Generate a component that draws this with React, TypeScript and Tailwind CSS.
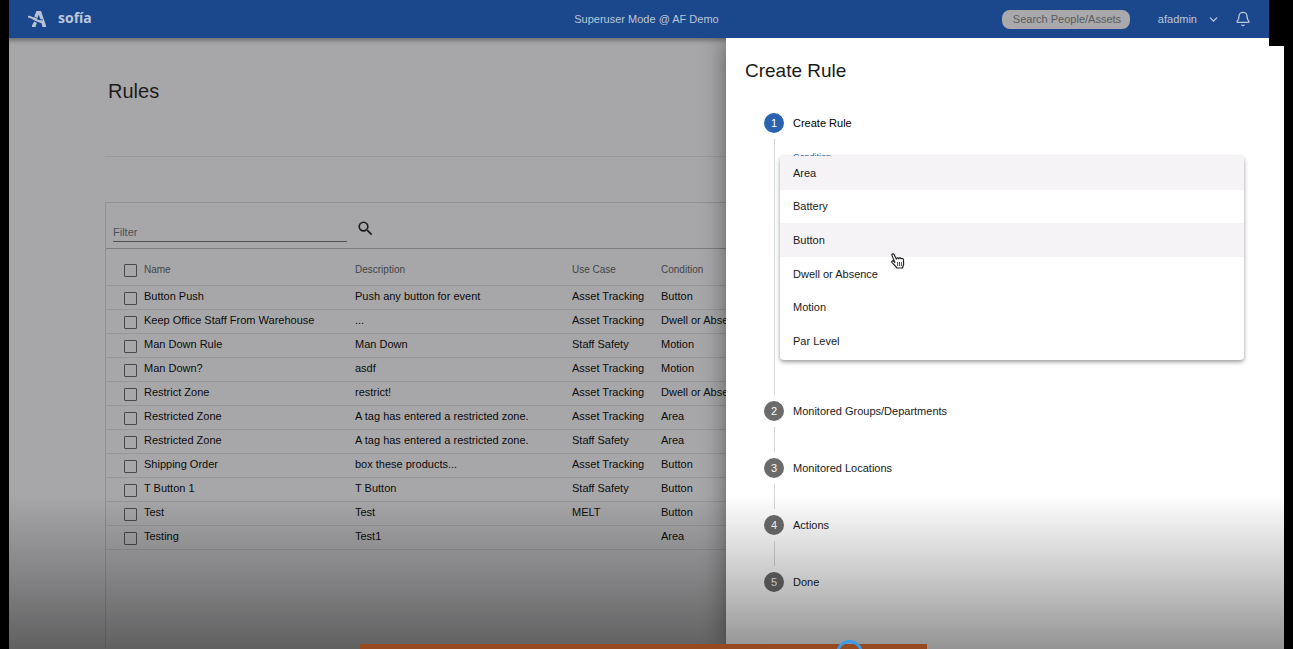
import { useState } from "react";
import { Bell, ChevronDown } from "lucide-react";
import { MdSearch } from "react-icons/md";

interface Rule {
  name: string;
  description: string;
  useCase: string;
  condition: string;
}

const rules: Rule[] = [
  { name: "Button Push", description: "Push any button for event", useCase: "Asset Tracking", condition: "Button" },
  { name: "Keep Office Staff From Warehouse", description: "...", useCase: "Asset Tracking", condition: "Dwell or Absence" },
  { name: "Man Down Rule", description: "Man Down", useCase: "Staff Safety", condition: "Motion" },
  { name: "Man Down?", description: "asdf", useCase: "Asset Tracking", condition: "Motion" },
  { name: "Restrict Zone", description: "restrict!", useCase: "Asset Tracking", condition: "Dwell or Absence" },
  { name: "Restricted Zone", description: "A tag has entered a restricted zone.", useCase: "Asset Tracking", condition: "Area" },
  { name: "Restricted Zone", description: "A tag has entered a restricted zone.", useCase: "Staff Safety", condition: "Area" },
  { name: "Shipping Order", description: "box these products...", useCase: "Asset Tracking", condition: "Button" },
  { name: "T Button 1", description: "T Button", useCase: "Staff Safety", condition: "Button" },
  { name: "Test", description: "Test", useCase: "MELT", condition: "Button" },
  { name: "Testing", description: "Test1", useCase: "", condition: "Area" },
];

const conditions = ["Area", "Battery", "Button", "Dwell or Absence", "Motion", "Par Level"];

const steps = ["Create Rule", "Monitored Groups/Departments", "Monitored Locations", "Actions", "Done"];

function Logo() {
  return (
    <svg viewBox="0 0 20 18" className="h-[18px] w-5" fill="#b9c3d6">
      <path d="M8.500 1 H13 L18 15.500 V17 H14.200 V15.500 L10.800 4.500 L10 6.800 L8.700 10.300 L5.500 8.300 Z" />
      <path d="M6.200 11.500 L9 13 L7.800 15.500 V17 H4 V15.500 Z" />
      <path d="M0 5.800 C4.500 5.500 8.500 10.800 15.500 10.800 L16.200 13 C9.500 13.800 5.500 8.500 0 7.500 Z" />
      <path d="M3.500 6 C7.500 6.500 10 9.700 15 10" fill="none" stroke="#1b488c" strokeWidth="0.8" />
    </svg>
  );
}

function HandCursor() {
  return (
    <svg
      viewBox="0 0 16 18"
      className="pointer-events-none absolute top-[96px] left-[110px] h-[18px] w-4"
      fill="#fff"
      stroke="#222"
      strokeWidth="1.2"
      strokeLinejoin="round"
    >
      <path d="M4.800 10.500 L2 3.400 C1.500 1.800 3.400 1.200 4.100 2.600 L6.300 7 C6.600 5.600 8.200 5.500 8.700 6.700 C9.200 5.600 10.700 5.700 11.100 6.800 C12 6 13.400 6.600 13.500 8 L13.600 12 C13.600 13.500 12.800 14 12.600 16 H6.800 C6 14 3.500 12.500 2 10.500 C1.200 9.200 2.600 8.300 3.700 9.400 Z" />
      <path d="M7.600 10v4M9.500 10v4M11.400 10v4" strokeWidth="0.8" />
    </svg>
  );
}

function Header() {
  return (
    <header className="mr-[15px] grid h-[38px] grid-cols-3 items-center bg-[#1b488c] pr-[18px] pl-[19px] text-[11px] text-[#bcc6d8]">
      <a href="#" className="flex items-center gap-2.5">
        <Logo />
        <span className="pb-0.5 font-['Open_Sans',sans-serif] text-[14px] leading-5 font-bold">sofía</span>
      </a>
      <div className="pl-[14px] text-center">Superuser Mode @ AF Demo</div>
      <div className="flex items-center justify-end">
        <input
          type="text"
          aria-label="Search People/Assets"
          placeholder="Search People/Assets"
          className="mr-7 h-[19px] w-32 rounded-lg bg-[#a9a9ab] pl-[11px] placeholder:text-[#5a5a5c]"
        />
        <button className="mr-[15px] flex items-center gap-2.5">
          afadmin
          <ChevronDown size={13} strokeWidth={2.5} />
        </button>
        <button aria-label="Notifications">
          <Bell size={16} />
        </button>
      </div>
    </header>
  );
}

function CheckBox({ label }: { label: string }) {
  return (
    <input
      type="checkbox"
      aria-label={label}
      className="mt-0.5 block size-[13px] appearance-none rounded-[1px] border border-[#48484a] checked:bg-[#48484a]"
    />
  );
}

function RulesPage() {
  return (
    <main className="min-w-0 flex-1 overflow-hidden bg-[#a7a7a9] shadow-[inset_0_6px_5px_-4px_rgba(0,0,0,0.4)]">
      <h1 className="mt-[41px] ml-[99px] text-[20px] leading-6 text-[#1c1c1c]">Rules</h1>
      <section className="mt-[53px] ml-24 min-w-[860px] border-t border-[#999b9b]">
        <div className="h-[45px]" />
        <div className="min-h-[446px] border-t border-l border-[#909292]">
          <div className="flex h-[46px] items-end gap-[9px] border-b border-[#7c7e7e] pb-1.5 pl-[7px]">
            <input
              aria-label="Filter"
              placeholder="Filter"
              className="h-5 w-[234px] border-b border-[#515153] text-[11px] placeholder:text-[#505052]"
            />
            <button aria-label="Search" className="pb-1 text-[#1c1c1c]">
              <MdSearch size={19} />
            </button>
          </div>
          <table className="w-full table-fixed text-left text-[11px] leading-4 whitespace-nowrap text-[#0c0c0c]">
            <colgroup>
              <col className="w-[38px]" />
              <col className="w-[211px]" />
              <col className="w-[217px]" />
              <col className="w-[89px]" />
              <col />
            </colgroup>
            <thead>
              <tr className="h-9 border-b border-[#949896] text-[10px] text-[#454547]">
                <th className="pt-1.5 pl-[18px]"><CheckBox label="Select all" /></th>
                <th className="pt-1.5 font-normal">Name</th>
                <th className="pt-1.5 font-normal">Description</th>
                <th className="pt-1.5 font-normal">Use Case</th>
                <th className="pt-1.5 font-normal">Condition</th>
              </tr>
            </thead>
            <tbody>
              {rules.map((r, i) => (
                <tr key={i} className="h-6 border-b border-[#949896]">
                  <td className="pl-[18px]"><CheckBox label={`Select ${r.name}`} /></td>
                  <td className="pb-0.5">{r.name}</td>
                  <td className="pb-0.5">{r.description}</td>
                  <td className="pb-0.5">{r.useCase}</td>
                  <td className="pb-0.5">{r.condition}</td>
                </tr>
              ))}
            </tbody>
          </table>
        </div>
      </section>
    </main>
  );
}

function ConditionSelect() {
  const [value, setValue] = useState("Area");

  return (
    <div className="relative mt-[18px]">
      <div id="condition-label" className="text-[9px] leading-3 text-[#2c5fae]">Condition</div>
      <div
        role="listbox"
        aria-labelledby="condition-label"
        className="absolute top-[5px] right-0 -left-[13px] flex h-[204px] flex-col rounded-sm bg-white pb-0.5 shadow-[0_2px_4px_rgba(0,0,0,0.4)]"
      >
        {conditions.map((c) => (
          <button
            key={c}
            role="option"
            aria-selected={c === value}
            onClick={() => setValue(c)}
            className={`flex-1 px-[13px] text-left hover:bg-[#f5f3f5] ${c === value || c === "Button" ? "bg-[#f5f3f5]" : ""}`}
          >
            {c}
          </button>
        ))}
        <HandCursor />
      </div>
    </div>
  );
}

function CreateRulePanel() {
  return (
    <aside className="relative w-[558px] shrink-0 bg-white pr-10 pl-[19px] text-[11px] text-[#1a1a1a] shadow-[0_0_24px_rgba(0,0,0,0.45)]">
      <h2 className="pt-[21px] text-[19px] leading-6">Create Rule</h2>
      <ol className="mt-[30px] ml-[19px]">
        {steps.map((step, i) => (
          <li key={step} className={`flex gap-[9px] ${i === 0 ? "h-72" : "h-[57px]"}`}>
            <div className="flex w-5 flex-col items-center gap-1.5 pb-1.5">
              <span
                className={`flex size-5 shrink-0 items-center justify-center rounded-full text-white ${i === 0 ? "bg-[#2a62b0]" : "bg-[#6b6b6b]"}`}
              >
                {i + 1}
              </span>
              {i < steps.length - 1 && <span className="w-px flex-1 bg-[#d3dad3]" />}
            </div>
            <div className="flex-1">
              <h3 className={`leading-5 ${i === 0 ? "text-black" : ""}`}>{step}</h3>
              {i === 0 && <ConditionSelect />}
            </div>
          </li>
        ))}
      </ol>
      {/* notch beside the header */}
      <div className="absolute top-0 right-0 h-2 w-[15px] bg-black" />
    </aside>
  );
}

export default function App() {
  return (
    <div className="relative flex h-screen flex-col overflow-hidden bg-black px-[9px] font-['Liberation_Sans',Arial,sans-serif]">
      <Header />
      <div className="flex min-h-0 flex-1 overflow-hidden">
        <RulesPage />
        <CreateRulePanel />
      </div>
      <div className="pointer-events-none absolute inset-x-0 bottom-0 h-[155px] bg-linear-to-b from-transparent via-black/20 to-black/42" />
      <div className="absolute inset-x-0 bottom-0 flex justify-center pr-[6px]">
        <div className="relative h-[5px] w-[44%] bg-[#97491f]">
          <div className="absolute -top-1 left-[84%] size-[27px] rounded-full border-[3px] border-[#3c9be8]" />
        </div>
      </div>
    </div>
  );
}
